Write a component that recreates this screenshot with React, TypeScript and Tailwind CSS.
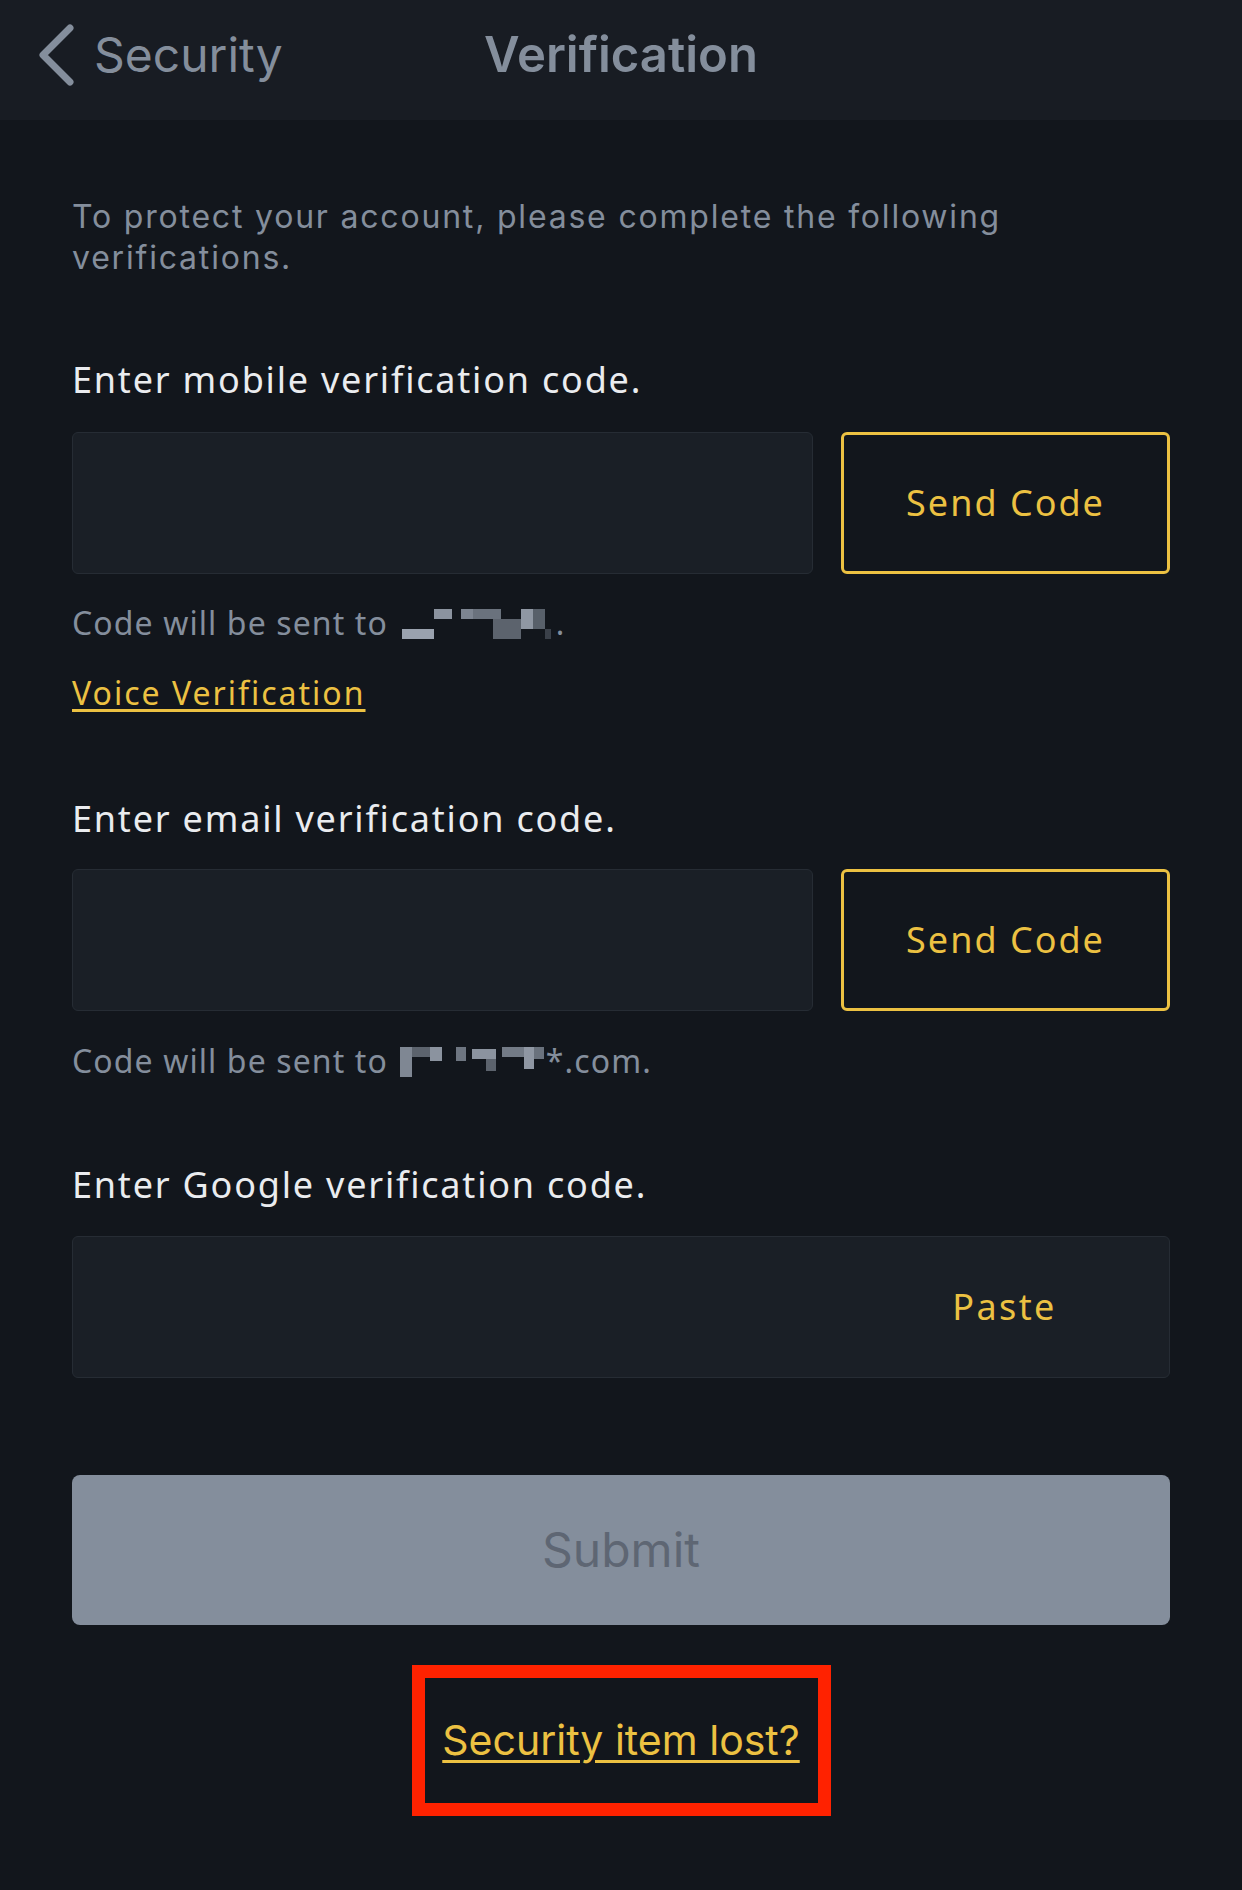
import React from 'react';

const plex = { fontFamily: '"Noto Sans", "Open Sans", sans-serif' };
const sf = { fontFamily: 'Inter, Roboto, sans-serif' };

function Chevron() {
  return (
    <svg width="40" height="64" viewBox="0 0 40 64" fill="none">
      <path d="M34 5 L7 32 L34 59" stroke="#848e9c" strokeWidth="7" strokeLinecap="round" strokeLinejoin="round" />
    </svg>
  );
}

// pixelated (blurred) phone number
function PhoneBlur() {
  return (
    <svg width="152" height="34" viewBox="0 0 152 34" className="inline-block ml-[14px] mr-[2px] align-[-6px]">
      <rect x="0" y="22" width="32" height="10" fill="#9aa2ae" />
      <rect x="32" y="2" width="18" height="10" fill="#8b939f" />
      <rect x="59" y="2" width="12" height="10" fill="#7d8591" />
      <rect x="71" y="2" width="28" height="10" fill="#6a727d" />
      <rect x="91" y="12" width="28" height="20" fill="#5c636d" />
      <rect x="119" y="2" width="12" height="20" fill="#8f97a3" />
      <rect x="131" y="2" width="12" height="20" fill="#58606a" />
      <rect x="143" y="22" width="6" height="10" fill="#3a4049" />
    </svg>
  );
}

// pixelated (blurred) email address
function EmailBlur() {
  return (
    <svg width="146" height="34" viewBox="0 0 146 34" className="inline-block ml-[12px] align-[-6px]">
      <rect x="0" y="2" width="12" height="30" fill="#7f8793" />
      <rect x="12" y="2" width="24" height="10" fill="#5c636d" />
      <rect x="30" y="2" width="12" height="14" fill="#8b939f" />
      <rect x="56" y="2" width="10" height="14" fill="#6e7681" />
      <rect x="72" y="4" width="24" height="10" fill="#8b939f" />
      <rect x="86" y="14" width="10" height="12" fill="#5c636d" />
      <rect x="102" y="2" width="22" height="10" fill="#737b86" />
      <rect x="124" y="2" width="10" height="22" fill="#8f97a3" />
      <rect x="134" y="2" width="10" height="12" fill="#6a727d" />
    </svg>
  );
}

function CodeRow() {
  return (
    <div className="flex gap-[28px]">
      <div className="flex-1 h-[142px] rounded-[6px] bg-[#1a1f26] border border-[#262c34]" />
      <button
        className="w-[329px] h-[142px] rounded-[6px] border-[3px] border-[#ecc142] text-[#ecc142] text-[36px] tracking-[2px]"
        style={plex}
      >
        Send Code
      </button>
    </div>
  );
}

export default function App() {
  return (
    <div className="min-h-screen w-[1242px] bg-[#12161c]">
      <div className="h-[120px] pb-[10px] bg-[#181c23] grid grid-cols-[1fr_auto_1fr] items-center" style={sf}>
        <div className="flex items-center pl-[36px]">
          <Chevron />
          <span className="ml-[18px] text-[48px] text-[#848e9c]">Security</span>
        </div>
        <div className="text-[49px] font-semibold text-[#848e9c]">Verification</div>
        <div />
      </div>

      <div className="px-[72px]">
        <p className="mt-[76px] text-[32px] leading-[41px] tracking-[1.8px] text-[#848e9c] pr-[60px]" style={sf}>
          To protect your account, please complete the following verifications.
        </p>

        <div className="mt-[76px] h-[52px] leading-[52px] text-[36px] tracking-[1.8px] text-[#eaecef]" style={plex}>
          Enter mobile verification code.
        </div>
        <div className="mt-[26px]">
          <CodeRow />
        </div>
        <div className="mt-[29px] h-[40px] leading-[40px] text-[32px] tracking-[1.1px] text-[#848e9c]" style={plex}>
          Code will be sent to
          <PhoneBlur />.
        </div>
        <div className="mt-[30px] h-[40px] leading-[40px]">
          <a
            className="text-[32px] tracking-[2px] text-[#ecc142] underline decoration-[3px] underline-offset-[4px]"
            style={plex}
          >
            Voice Verification
          </a>
        </div>

        <div className="mt-[80px] h-[52px] leading-[52px] text-[36px] tracking-[1.8px] text-[#eaecef]" style={plex}>
          Enter email verification code.
        </div>
        <div className="mt-[24px]">
          <CodeRow />
        </div>
        <div className="mt-[30px] h-[40px] leading-[40px] text-[32px] tracking-[1.1px] text-[#848e9c]" style={plex}>
          Code will be sent to
          <EmailBlur />*.com.
        </div>

        <div className="mt-[78px] h-[52px] leading-[52px] text-[36px] tracking-[1.8px] text-[#eaecef]" style={plex}>
          Enter Google verification code.
        </div>
        <div className="mt-[25px] h-[142px] rounded-[6px] bg-[#1a1f26] border border-[#262c34] flex items-center justify-end">
          <span className="w-[329px] text-center text-[36px] tracking-[2.4px] text-[#ecc142]" style={plex}>
            Paste
          </span>
        </div>

        <button
          className="mt-[97px] w-full h-[150px] rounded-[8px] bg-[#848e9c] text-[48px] text-[#5e6673]"
          style={sf}
        >
          Submit
        </button>

        <div className="mt-[40px] mx-auto w-[419px] h-[151px] border-[13px] border-[#ff2200] flex items-center justify-center">
          <a
            className="text-[41px] text-[#ecc142] underline decoration-[3px] underline-offset-[5px]"
            style={sf}
          >
            Security item lost?
          </a>
        </div>
      </div>
    </div>
  );
}
